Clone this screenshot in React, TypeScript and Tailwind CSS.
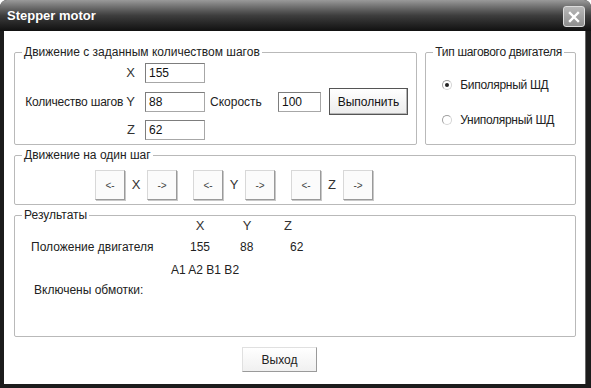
import React from "react";

const font = { fontFamily: '"Liberation Sans", Arial, sans-serif' };

const Input: React.FC<{ value: string; w: string }> = ({ value, w }) => (
  <div
    className={`${w} h-[20px] border border-[#a7a7a7] border-t-[#7d7d7d] border-l-[#7d7d7d] bg-white pl-[3px] text-[12px] leading-[18px] text-[#111]`}
  >
    {value}
  </div>
);

const StepButton: React.FC<{ label: string }> = ({ label }) => (
  <div className="w-[30px] h-[30px] flex items-center justify-center bg-[#fbfbfb] border border-[#d8d8d8] border-r-[#9a9a9a] border-b-[#9a9a9a] shadow-[1px_1px_0_#c8c8c8] text-[10px] text-[#444]">
    {label}
  </div>
);

const Radio: React.FC<{ checked?: boolean; label: string }> = ({ checked, label }) => (
  <div className="flex items-center h-[14px]">
    <div className="w-[10px] h-[10px] rounded-full border border-[#d5d5d5] border-t-[#a0a0a0] border-l-[#a0a0a0] bg-white flex items-center justify-center">
      {checked && <div className="w-[4px] h-[4px] rounded-full bg-[#222]" />}
    </div>
    <span className="ml-[8px] text-[12px] text-[#222] whitespace-nowrap">{label}</span>
  </div>
);

const Group: React.FC<{ title: string; className: string; children: React.ReactNode }> = ({
  title,
  className,
  children,
}) => (
  <fieldset className={`border border-[#b9b9b9] rounded-[2px] ${className}`}>
    <legend className="ml-[7px] px-[2px] text-[12px] leading-[14px] text-[#222] whitespace-nowrap">{title}</legend>
    {children}
  </fieldset>
);

export default function App() {
  return (
    <div style={font} className="w-[591px] h-[388px] flex flex-col bg-[#1c1c1c] rounded-t-[7px] overflow-hidden">
      {/* title bar */}
      <div className="h-[31px] shrink-0 flex items-center justify-between pl-[7px] pr-[6px] bg-gradient-to-b from-[#9a9a9a] via-[#3e3e3e] to-[#111]">
        <span className="text-white text-[13px] font-bold mt-[1px]">Stepper motor</span>
        <div className="w-[22px] h-[21px] rounded-[3px] bg-gradient-to-b from-[#b8b8b8] to-[#8e8e8e] border border-[#dcdcdc] flex items-center justify-center mt-[2px]">
          <svg width="12" height="12" viewBox="0 0 12 12">
            <path d="M2 2 L10 10 M10 2 L2 10" stroke="white" strokeWidth="2.4" strokeLinecap="square" />
          </svg>
        </div>
      </div>

      {/* client */}
      <div className="flex-1 ml-[4px] mr-[5px] mb-[4px] bg-white border-r border-[#6a6a6a] flex flex-col pl-[10px] pr-[9px] pt-[14px]">
        <div className="flex gap-[8px]">
          <Group title="Движение с заданным количеством шагов" className="w-[404px] h-[100px]">
            <div className="flex flex-col gap-[5px] mt-[4px] pl-[7px]">
              <div className="flex items-center">
                <span className="w-[113px] text-right text-[13px] text-[#333]">X</span>
                <div className="ml-[10px]"><Input value="155" w="w-[60px]" /></div>
              </div>
              <div className="flex items-center">
                <span className="w-[113px] text-right text-[12px] text-[#222] whitespace-nowrap tracking-[-0.2px]">
                  Количество шагов <span className="text-[13px] text-[#333] tracking-normal">Y</span>
                </span>
                <div className="ml-[10px]"><Input value="88" w="w-[60px]" /></div>
                <span className="ml-[5px] w-[68px] text-[12px] text-[#222]">Скорость</span>
                <Input value="100" w="w-[43px]" />
                <div className="ml-[8px] w-[79px] h-[27px] flex items-center justify-center border border-[#555] bg-gradient-to-b from-white to-[#ececec] shadow-[inset_-1px_-1px_0_#b5b5b5] text-[12px] text-[#111]">
                  Выполнить
                </div>
              </div>
              <div className="flex items-center">
                <span className="w-[113px] text-right text-[13px] text-[#333]">Z</span>
                <div className="ml-[10px]"><Input value="62" w="w-[60px]" /></div>
              </div>
            </div>
          </Group>
          <Group title="Тип шагового двигателя" className="w-[151px] h-[100px] tracking-[-0.3px]">
            <div className="flex flex-col gap-[21px] mt-[19px] pl-[16px]">
              <Radio checked label="Биполярный ШД" />
              <Radio label="Униполярный ШД" />
            </div>
          </Group>
        </div>

        <Group title="Движение на один шаг" className="mt-[3px] h-[57px]">
          <div className="flex gap-[16px] mt-[8px] pl-[80px]">
            {["X", "Y", "Z"].map((axis) => (
              <div key={axis} className="flex items-center">
                <StepButton label="<-" />
                <span className="w-[22px] text-center text-[13px] text-[#333]">{axis}</span>
                <StepButton label="->" />
              </div>
            ))}
          </div>
        </Group>

        <Group title="Результаты" className="mt-[3px] h-[129px]">
          <div className="pl-[16px]">
            <div className="flex text-[13px] text-[#333] -mt-[3px] h-[14px] leading-[14px]">
              <span className="ml-[159px] w-[20px] text-center">X</span>
              <span className="ml-[27px] w-[20px] text-center">Y</span>
              <span className="ml-[21px] w-[20px] text-center">Z</span>
            </div>
            <div className="flex text-[12px] text-[#222] mt-[7px] leading-[14px]">
              <span className="w-[159px]">Положение двигателя</span>
              <span className="w-[50px]">155</span>
              <span className="w-[50px]">88</span>
              <span>62</span>
            </div>
            <div className="text-[12px] text-[#222] mt-[9px] ml-[140px] leading-[14px]">A1 A2 B1 B2</div>
            <div className="text-[12px] text-[#222] mt-[6px] ml-[3px] leading-[14px]">Включены обмотки:</div>
          </div>
        </Group>

        <div className="mt-[10px] ml-[228px] w-[75px] h-[25px] flex items-center justify-center bg-gradient-to-b from-white to-[#f0f0f0] border border-[#e0e0e0] border-r-[#9a9a9a] border-b-[#9a9a9a] text-[12px] text-[#222]">
          Выход
        </div>
      </div>
    </div>
  );
}
